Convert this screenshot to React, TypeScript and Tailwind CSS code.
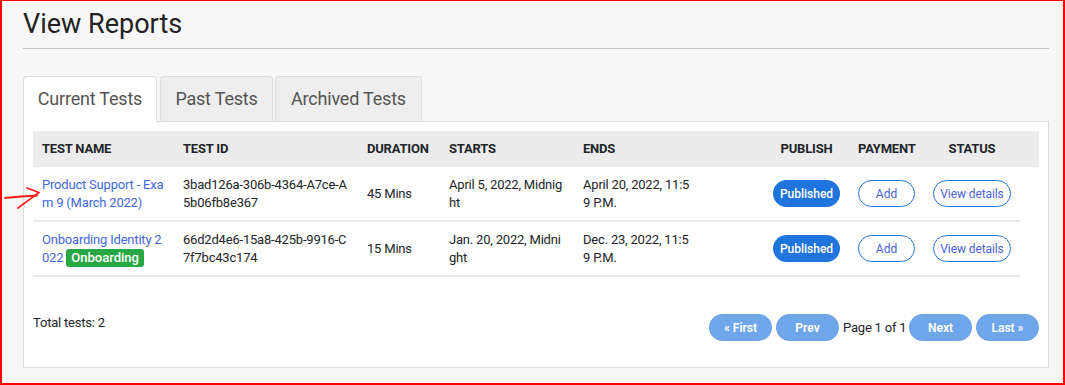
import React from "react";

type Row = {
  name: React.ReactNode;
  id: string;
  duration: string;
  starts: string;
  ends: string;
};

const rows: Row[] = [
  {
    name: "Product Support - Exam 9 (March 2022)",
    id: "3bad126a-306b-4364-A7ce-A5b06fb8e367",
    duration: "45 Mins",
    starts: "April 5, 2022, Midnight",
    ends: "April 20, 2022, 11:59 P.M.",
  },
  {
    name: (
      <>
        {"Onboarding Identity 2022 "}
        <span className="inline-block rounded-[3px] bg-[#28a745] px-[5px] text-[13px] leading-[18px] font-medium tracking-normal text-white [word-break:normal]">
          Onboarding
        </span>
      </>
    ),
    id: "66d2d4e6-15a8-425b-9916-C7f7bc43c174",
    duration: "15 Mins",
    starts: "Jan. 20, 2022, Midnight",
    ends: "Dec. 23, 2022, 11:59 P.M.",
  },
];

const cols = "grid grid-cols-[141px_184px_82px_134px_190px_85px_75px_96px]";

function Arrow() {
  return (
    <svg
      className="absolute left-0 top-[183px]"
      width="42"
      height="30"
      viewBox="0 0 42 30"
    >
      <path
        d="M3 14 C 12 13, 24 12, 35 11.5"
        stroke="#ff1a1a"
        strokeWidth="1.8"
        fill="none"
        strokeLinecap="round"
      />
      <path
        d="M25 4 C 29 5.5, 33 7, 37 8.5 C 31 13, 24 18, 16 24"
        stroke="#ff1a1a"
        strokeWidth="1.8"
        fill="none"
        strokeLinecap="round"
        strokeLinejoin="round"
      />
    </svg>
  );
}

const tabBase =
  "flex justify-center rounded-t-[4px] border border-b-0 border-[#dddddd] pt-[10px] text-[18px] leading-[24px] tracking-[-0.2px] text-[#555]";

export default function App() {
  return (
    <div className="relative w-[1065px] h-[385px] overflow-hidden bg-[#f7f7f7] border-l-2 border-r-2 border-b-2 border-t border-[#ff0000] font-['Roboto',sans-serif] text-[#212529]">
      <Arrow />
      <div className="ml-[21px] w-[1026px]">
        <h1 className="mt-[7px] text-[27px] leading-[32px] font-normal text-[#222]">
          View Reports
        </h1>
        <div className="mt-[8px] h-px bg-[#c9c1c1]" />

        <div className="mt-[27px] flex h-[45px] items-start">
          <div className={`${tabBase} relative z-10 h-[46px] w-[134px] bg-white`}>
            Current Tests
          </div>
          <div className={`${tabBase} ml-[3px] h-[45px] w-[113px] bg-[#eeeeee]`}>
            Past Tests
          </div>
          <div className={`${tabBase} ml-[2px] h-[45px] w-[147px] bg-[#eeeeee]`}>
            Archived Tests
          </div>
        </div>

        <div className="border border-[#dddddd] bg-white p-[9px]">
          <div className="bg-[#ececec]">
            <div className={`${cols} h-[36px] items-center text-[13px] font-bold uppercase tracking-[-0.2px] text-[#212529]`}>
              <div className="px-[9px]">Test Name</div>
              <div className="px-[9px]">Test ID</div>
              <div className="px-[9px]">Duration</div>
              <div className="px-[9px]">Starts</div>
              <div className="px-[9px]">Ends</div>
              <div className="px-[9px] text-center">Publish</div>
              <div className="px-[9px] text-center">Payment</div>
              <div className="px-[9px] text-center">Status</div>
            </div>
          </div>

          <div className="w-[987px]">
            {rows.map((r, i) => (
              <div
                key={i}
                className={`${cols} h-[55px] items-center border-b-2 border-[#e9e9e9] text-[13px] leading-[18px] tracking-[-0.2px]`}
              >
                <div className="px-[9px] break-all text-[#4169e1]">{r.name}</div>
                <div className="px-[9px] break-all">{r.id}</div>
                <div className="px-[9px]">{r.duration}</div>
                <div className="px-[9px] break-all">{r.starts}</div>
                <div className="px-[9px]">
                  <div className="w-[112px] break-all">{r.ends}</div>
                </div>
                <div className="flex justify-center">
                  <button className="h-[27px] w-[67px] rounded-full bg-[#1f74de] text-[12px] font-medium tracking-normal text-white">
                    Published
                  </button>
                </div>
                <div className="flex justify-center">
                  <button className="h-[27px] w-[57px] rounded-full border border-[#1f74de] bg-white text-[12px] tracking-normal text-[#4a62d8]">
                    Add
                  </button>
                </div>
                <div className="flex justify-center">
                  <button className="h-[27px] w-[78px] rounded-full border border-[#1f74de] bg-white text-[12px] tracking-[-0.1px] text-[#4a62d8]">
                    View details
                  </button>
                </div>
              </div>
            ))}
          </div>

          <div className="mt-[37px] mb-[17px] flex items-start justify-between">
            <div className="text-[13px] leading-[18px] tracking-[-0.2px] text-[#212529]">Total tests: 2</div>
            <div className="flex h-[27px] items-center gap-[4px]">
              <button className="h-[27px] w-[63px] rounded-full bg-[#6fa6ea] text-[12px] font-semibold text-white">
                « First
              </button>
              <button className="h-[27px] w-[63px] rounded-full bg-[#6fa6ea] text-[12px] font-semibold text-white">
                Prev
              </button>
              <span className="w-[62px] whitespace-nowrap text-center text-[13px] tracking-[-0.2px] text-[#212529]">Page 1 of 1</span>
              <button className="h-[27px] w-[63px] rounded-full bg-[#6fa6ea] text-[12px] font-semibold text-white">
                Next
              </button>
              <button className="h-[27px] w-[63px] rounded-full bg-[#6fa6ea] text-[12px] font-semibold text-white">
                Last »
              </button>
            </div>
          </div>
        </div>
      </div>
    </div>
  );
}
